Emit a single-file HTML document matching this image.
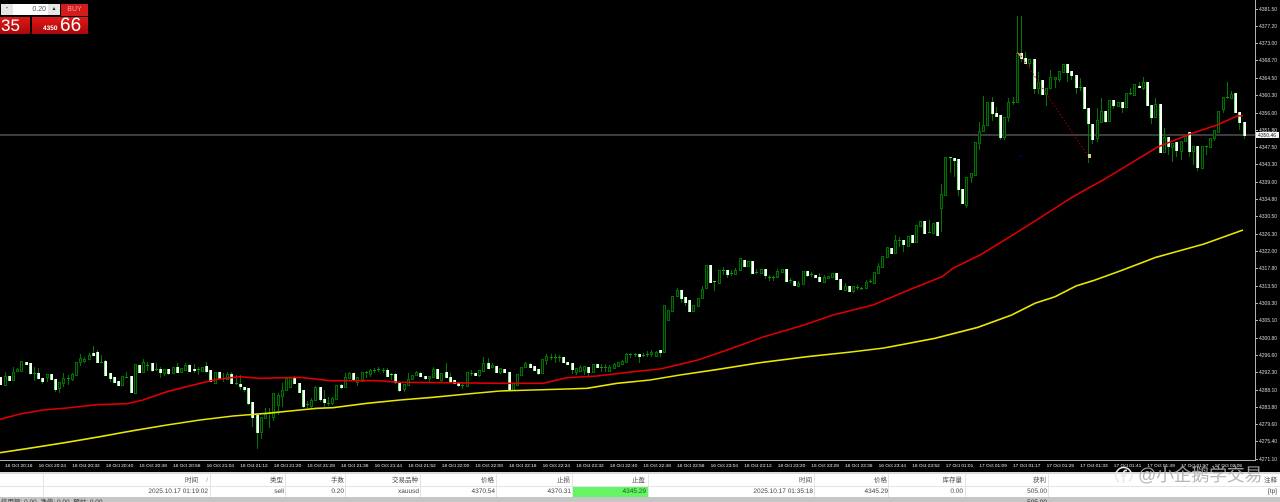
<!DOCTYPE html>
<html><head><meta charset="utf-8">
<style>
html,body{margin:0;padding:0;background:#000;width:1280px;height:502px;overflow:hidden}
body{position:relative;font-family:"Liberation Sans","Noto Sans CJK SC",sans-serif}
#c{position:absolute;left:0;top:0}
.t{position:absolute;left:0;top:472px;width:1280px;height:30px;background:#fff}
.t .s{position:absolute;left:0;top:0;width:1280px;height:2px;background:#d8d8d8}
.t .m{position:absolute;left:0;top:14px;width:1280px;height:1px;background:#e4e4e4}
.t .g{position:absolute;left:0;top:25px;width:1280px;height:5px;background:#c6c6c6;overflow:hidden;font-size:6.5px;color:#333}
.t .v{position:absolute;top:2px;width:1px;height:23px;background:#e4e4e4}
.t .h,.t .r{position:absolute;font-size:6.5px;line-height:10px;color:#444;text-align:right;white-space:nowrap}
.t .h{top:4px}.t .r{top:15px}
.w{position:absolute}
</style></head><body>
<svg id="c" width="1280" height="472" viewBox="0 0 1280 472" xmlns="http://www.w3.org/2000/svg">
<rect width="1280" height="472" fill="#000"/>
<rect x="0" y="134" width="1255" height="2" fill="#3c3c3c"/>
<g id="bars" shape-rendering="crispEdges"></g>
<path d="M1019 53L1088 156" stroke="#a00000" stroke-width="1" stroke-dasharray="1.5 2" fill="none"/>
<rect x="1088" y="154" width="3" height="4" fill="#e8c890"/>
<path d="M1017 52l5 3-2 2z" fill="#ff8080"/>
<rect x="1019" y="155.500" width="4" height="1" fill="#000080"/>
<polyline fill="none" stroke="#e00000" stroke-width="1.600" points="0,419.300 20,414 43,410 67,408 97,404.700 127,403.700 143,400 167,391.700 200,383.300 217,379.300 240,376.700 260,378.300 300,377.300 330,380.700 377,380.700 400,382.300 443,382.700 500,383.300 543,383.300 567,377.700 597,376 633,371.700 660,369 680,364.300 698,360 727,350 764,336.700 804,325 833,315 873,305 913,288.300 942,276.700 953,268.300 980,255 1009,237.300 1035,221 1060,205 1073,196.700 1103,180 1123,168 1140,157.700 1157,147.300 1190,134 1217,125 1237,116 1243,115.700"/>
<polyline fill="none" stroke="#e8e800" stroke-width="1.600" points="0,452.700 33,447.700 67,442.300 100,436.700 133,430.700 167,425 200,420 233,416 267,413.300 300,410 317,408.300 333,407.700 367,403.300 400,400 433,397.300 467,394 500,391 533,390 567,389 587,388.300 617,383.300 650,380 680,375 716,369.700 760,362.700 807,356.700 851,352 884,348 935,338.300 978,327.300 1011,315.300 1035,303.300 1055,296.700 1076,286 1093,280.700 1120,271 1156,257.300 1204,244 1243,230"/>
<path d="M0 460.500H1255.500V0" fill="none" stroke="#b0b0b0" stroke-width="1" shape-rendering="crispEdges"/>
<g stroke="#b0b0b0" shape-rendering="crispEdges"><path d="M1256 9.500h2M1256 26.500h2M1256 43.500h2M1256 60.500h2M1256 78.500h2M1256 95.500h2M1256 113.500h2M1256 130.500h2M1256 147.500h2M1256 164.500h2M1256 182.500h2M1256 199.500h2M1256 216.500h2M1256 234.500h2M1256 251.500h2M1256 268.500h2M1256 286.500h2M1256 303.500h2M1256 320.500h2M1256 338.500h2M1256 355.500h2M1256 372.500h2M1256 390.500h2M1256 407.500h2M1256 424.500h2M1256 441.500h2M1256 459.500h2"/></g>
<g fill="#d8d8d8" font-family="Liberation Sans" font-size="5">
<text x="1259" y="11">4381.50</text><text x="1259" y="28">4377.20</text><text x="1259" y="45">4373.00</text><text x="1259" y="62">4368.70</text><text x="1259" y="80">4364.50</text><text x="1259" y="97">4360.30</text><text x="1259" y="115">4356.00</text><text x="1259" y="132">4351.80</text><text x="1259" y="149">4347.50</text><text x="1259" y="166">4343.30</text><text x="1259" y="184">4339.00</text><text x="1259" y="201">4334.80</text><text x="1259" y="218">4330.50</text><text x="1259" y="236">4326.30</text><text x="1259" y="253">4322.00</text><text x="1259" y="270">4317.80</text><text x="1259" y="288">4313.50</text><text x="1259" y="305">4309.30</text><text x="1259" y="322">4305.10</text><text x="1259" y="340">4300.80</text><text x="1259" y="357">4296.60</text><text x="1259" y="374">4292.30</text><text x="1259" y="392">4288.10</text><text x="1259" y="409">4283.80</text><text x="1259" y="426">4279.60</text><text x="1259" y="443">4275.40</text><text x="1259" y="461">4271.10</text>
</g>
<rect x="1256" y="132" width="23" height="6" fill="#f4f4f4"/>
<text x="1258" y="137" fill="#222" font-family="Liberation Sans" font-size="5">4350.46</text>
<g fill="#e4e4e4" font-family="Liberation Sans" font-size="4.800">
<text x="5" y="467">16 Oct 20:16</text><text x="38.600" y="467">16 Oct 20:24</text><text x="72.200" y="467">16 Oct 20:32</text><text x="105.800" y="467">16 Oct 20:40</text><text x="139.400" y="467">16 Oct 20:48</text><text x="173" y="467">16 Oct 20:56</text><text x="206.600" y="467">16 Oct 21:04</text><text x="240.200" y="467">16 Oct 21:12</text><text x="273.800" y="467">16 Oct 21:20</text><text x="307.400" y="467">16 Oct 21:28</text><text x="341" y="467">16 Oct 21:36</text><text x="374.600" y="467">16 Oct 21:44</text><text x="408.200" y="467">16 Oct 21:52</text><text x="441.800" y="467">16 Oct 22:00</text><text x="475.400" y="467">16 Oct 22:08</text><text x="509" y="467">16 Oct 22:16</text><text x="542.600" y="467">16 Oct 22:24</text><text x="576.200" y="467">16 Oct 22:32</text><text x="609.800" y="467">16 Oct 22:40</text><text x="643.400" y="467">16 Oct 22:48</text><text x="677" y="467">16 Oct 22:56</text><text x="710.600" y="467">16 Oct 23:04</text><text x="744.200" y="467">16 Oct 23:12</text><text x="777.800" y="467">16 Oct 23:20</text><text x="811.400" y="467">16 Oct 23:28</text><text x="845" y="467">16 Oct 23:36</text><text x="878.600" y="467">16 Oct 23:44</text><text x="912.200" y="467">16 Oct 23:52</text><text x="945.800" y="467">17 Oct 01:01</text><text x="979.400" y="467">17 Oct 01:09</text><text x="1013" y="467">17 Oct 01:17</text><text x="1046.600" y="467">17 Oct 01:25</text><text x="1080.200" y="467">17 Oct 01:33</text><text x="1113.800" y="467">17 Oct 01:41</text><text x="1147.400" y="467">17 Oct 01:49</text><text x="1181" y="467">17 Oct 01:57</text><text x="1214.600" y="467">17 Oct 02:05</text>
</g>
</svg>

<div class="t">
<div class="s"></div><div class="m"></div>
<div class="v" style="left:43px"></div><div class="v" style="left:210px"></div><div class="v" style="left:285px"></div><div class="v" style="left:345px"></div><div class="v" style="left:420px"></div><div class="v" style="left:496px"></div><div class="v" style="left:572px"></div><div class="v" style="left:648px"></div><div class="v" style="left:814px"></div><div class="v" style="left:888px"></div><div class="v" style="left:965px"></div><div class="v" style="left:1048px"></div>
<div class="w" style="left:573px;top:15px;width:75px;height:10px;background:#63f563"></div>
<span class="h" style="right:1082px">时间</span><span class="h" style="right:1072px;color:#999">/</span>
<span class="h" style="right:997px">类型</span><span class="h" style="right:936px">手数</span><span class="h" style="right:862px">交易品种</span><span class="h" style="right:786px">价格</span><span class="h" style="right:710px">止损</span><span class="h" style="right:635px">止盈</span><span class="h" style="right:468px">时间</span><span class="h" style="right:393px">价格</span><span class="h" style="right:318px">库存量</span><span class="h" style="right:234px">获利</span><span class="h" style="right:3px">注释</span>
<span class="r" style="right:1072px">2025.10.17 01:19:02</span><span class="r" style="right:996px">sell</span><span class="r" style="right:936px">0.20</span><span class="r" style="right:861px">xauusd</span><span class="r" style="right:785px">4370.54</span><span class="r" style="right:709px">4370.31</span><span class="r" style="right:634px;color:#225522">4345.29</span><span class="r" style="right:467px">2025.10.17 01:35:18</span><span class="r" style="right:392px">4345.29</span><span class="r" style="right:317px">0.00</span><span class="r" style="right:233px">505.00</span><span class="r" style="right:3px">[tp]</span>
<div class="g"><span style="position:absolute;left:1px;top:2px;line-height:7px;white-space:nowrap">信用额: 0.00&nbsp; 净值: 0.00&nbsp; 预付: 0.00</span><span style="position:absolute;right:233px;top:2px;line-height:7px">505.00</span></div>
</div>

<div class="w" style="left:1px;top:4px;width:12px;height:11px;background:#e6e6e6;color:#222;font-size:7px;line-height:10px;text-align:center">-</div>
<div class="w" style="left:13px;top:4px;width:33px;height:11px;padding-right:2px;background:#fff;color:#555;font-size:7px;line-height:11px;text-align:right">0.20</div>
<div class="w" style="left:48px;top:4px;width:12px;height:11px;background:#e6e6e6;color:#222;font-size:5px;line-height:11px;text-align:center">▲</div>
<div class="w" style="left:61px;top:4px;width:27px;height:12px;background:#d41c1c;color:#f4a0a0;font-size:7px;line-height:12px;text-align:center">BUY</div>
<div class="w" style="left:0;top:17px;width:30px;height:17px;background:linear-gradient(#e01818,#a80808);color:#fff;font-size:17px;line-height:17px;padding-left:1px;box-sizing:border-box">35</div>
<div class="w" style="left:32px;top:17px;width:56px;height:17px;background:linear-gradient(#e01818,#a80808)"></div>
<div class="w" style="left:43px;top:25px;color:#fff;font-size:6.500px;font-weight:bold;line-height:8px">4350</div>
<div class="w" style="left:60px;top:17px;color:#fff;font-size:19px;line-height:17px">66</div>

<svg class="w" style="left:1114px;top:464px" width="20" height="22" viewBox="0 0 20 22" xmlns="http://www.w3.org/2000/svg">
<path d="M5 18A8 8 0 1 1 15 17.500" fill="none" stroke="#e8e8e8" stroke-width="1.500"/>
<path d="M13 6.500C10.500 6 9.500 7.500 9.500 10V19M7 11.500H12.500" fill="none" stroke="#e8e8e8" stroke-width="1.700"/>
</svg>
<div class="w" style="left:1138px;top:463px;font-size:18px;line-height:24px;letter-spacing:-.3px;color:rgba(175,175,175,.9);white-space:nowrap;font-family:'Liberation Sans','WenQuanYi Zen Hei',sans-serif">@小企鹅学交易</div>

<script>
var segs=[
[340,-1,"d110,133 u107,134,95,137 d108,120 u97,120,80 u88,94,85,96 u64,92 d65,72 d70,100,,105 u98,100,82,122 d99,113,85 d113,123,,133 u103,112,,125 d102,117 d118,147,,155 u125,143,,158 u115,130,98,140 u113,113,105,135 u102,118,98,122 u67,105 u55,66,42,78 u58,62,52,68 u44,57,38 d40,44,18,45 d36,65,30,66 u65,65,45,70 d63,105,60,108 d100,113,,125 d111,125 d122,135 u108,135 u110,110,97,115 d108,155 u72,158 d75,95 u67,95,57 u75,75,67,92 d70,90,,95 u87,87,70,92 d88,95,80,115 u86,98,,108 d87,100,,105 u80,98,,103 d82,95,70,97 u85,97 u75,90,70,92 d75,92,72,95 d88,90,72,100 u88,88,80,105 u80,93,80,96 d78,92,65,100 d90,122,,125 u95,128 d97,113,,120 u115,115,100,125 u103,117,95,120 d103,130,95,132 u130,130,105,135 d132,138,105,150 d142,148,,155 d145,190,,195 d187,230,,260 d225,275,,328 u232,277,,298 u222,233,205 u220,220,205,265 u160,230,,243 u165,195,160,225 u150,167,130,200 u115,150,112 u110,140 d110,130,108 d130,155"],
[340,71,"d150,198,,205 u192,192,182,203 u180,197,175,205 u142,180,138 d140,178,,185 d178,186,150,205 u188,188,170,198 u175,188,170,195 u135,177 d135,142,132,148 u112,140,98 u100,113,97,117 d100,117,,120 u112,125,,138 u97,122 u97,97,92,115 u90,102,88,110 u90,90,85,100 u88,88,82,97 u90,90,85,100 d90,108,85,110 d103,103,100,120 d103,125,100,132 d128,150,,155 u133,148,,157 u118,135,100,138 u105,118,,120 u95,105,92 d100,108,95,112 d108,115,,120 u107,115,,125 u87,110,80 d88,115 u98,120,,125 d97,112,70,115 d110,122,100,125 d120,128,,132 d128,135,,142 u135,135,125,147 u97,138 u98,98,90,107 d98,105,,108 u90,105,,110 u70,93,52 d70,85,55,88 u75,82,70,85 d77,95,,100 u85,95,,103 d87,95,,98 d95,150,,152 u130,150,,152 u103,135 u82,105,80 u70,82,65,85 d72,82,70,85 d78,90 d88,100,,105 u58,98 u48,60,42,75 u50,50,42,60 u52,52,42,68 u50,50,45,65 d50,65,,70 d65,72 d70,88,,103 u85,95,,105 u82,92,75 u78,90,,105 d80,95,,108 u72,95 d72,82 u80,80,72,95 u80,80,72,97 u82,92,75 u72,85,70 u67,78 u62,72,60 u43,65,40 u42,42,38,53 u42,42,38,50 d42,47,,70 u45,45,38,50 u42,42,33,50 u37,42,30,50 u37,47,32,50 d31,37,,50 u-105,35"],
[220,158,"u270,300 u228,272 u210,228,205 d210,233,,248 d232,245,,258 d240,272 u255,272 u235,257 u208,235,198 u134,205 d134,187 d182,182,,212 u150,190 u150,150,142,165 d150,162,,175 u160,160,150,168 u150,163,145 u114,150 d120,137 u122,137 d123,158 u156,156,148,162 u148,160 d146,165,,178 u170,170,165,182 u170,170,168,183 u152,170,148 u146,155 d146,182 u180,180,175,188 d182,195,,198 u188,197,182 u152,193 d152,165,,170 u162,162,155,170 d164,171,,175 d170,183,158 u172,185,165 u168,175 u160,170 d160,177 d176,208 u197,210,190 d197,212 u198,212,,218 u202,202,195,210 u203,203,200,210 u185,205,180 u184,184,178,190 u155,188 u138,160,130 u108,142 u82,110 d84,98 u60,100,45 u60,60,50,80 d60,73,,95 u47,78 d45,65 u15,65 u3,17 d3,38 u37,37,0,40 u8,38 d6,45"],
[60,223,"u403,445,372,515 u290,405 d292,292,,338 d295,300,,350 d298,388,,408 d388,428 u350,435,,445 u340,352,,368 u245,344 u212,250,185,270 u195,213,107 u125,195 d125,158,110,183 d158,168,140 d165,232,,240 u172,232,,240 u127,172,115,185 u126,126,112,135 "],
[0,241,"u160,305,48 d160,175,48,185 d175,190,155,185 u178,188,,200 d177,265,,283 u245,265,215,283 d240,283 u265,282,,318 u232,265,210 u232,237,,265 u213,236,,247 u192,215 d192,217,,245 d214,224,,240 d225,262,,283 u261,261,235,272 d260,325 d325,370,,488 d372,417,,432 u360,415,325,425 u332,365,295 d332,362,,370 u300,362 d300,316,,328 u307,317,,322 d307,320,,338 u280,320 u280,280,265,285 u252,285 d258,262,245 u247,265,232,270 d247,316 d314,350,,372 u313,352,295 d313,455,,458 u410,455,385,458 d410,437,,465 u428,440,,485 d427,450,,470 u422,452,,480 u407,422 d397,452,,470 u437,452,,495 d437,500,,512 u437,503 u437,437,,465 u415,440 u390,415,,422 u332,397 u290,328,,340 u290,292,245,298 u282,295,272 d280,335 d335,365,,390 d365,405,,418"]
];
var o='';
function R(x,y,w,h,f){return '<rect x="'+x+'" y="'+y+'" width="'+w+'" height="'+h+'" fill="'+f+'"/>';}
segs.forEach(function(s){
 var b=s[0],i=s[1];
 s[2].trim().split(/\s+/).forEach(function(it){
  var k=it.charAt(0),a=it.slice(1).split(',');
  var t=+a[0],e=+a[1],h=a[2]?+a[2]:t,l=a[3]?+a[3]:e;
  var T=Math.round(b+t/3),E=Math.round(b+e/3),H=Math.round(b+Math.min(h,t)/3),L=Math.round(b+Math.max(l,e)/3);
  var x=Math.floor(5+4.2*i);
  if(x>=-2){
   o+=R(x,H,1,Math.max(L-H,1),'#007800');
   if(E<=T){o+=R(x-1,T,3,1,k=='d'?'#40e840':'#00a000');}
   else if(k=='d'){o+=R(x-1,T,3,E-T+1,'#70f070');o+=R(x,T,2,E-T+1,'#fff');}
   else{o+=R(x-1,T,3,E-T+1,'#007000');if(E-T>1)o+=R(x,T+1,1,E-T-1,'#001800');}
  }
  i++;
 });
});
document.getElementById('bars').innerHTML=o;
</script>
</body></html>
